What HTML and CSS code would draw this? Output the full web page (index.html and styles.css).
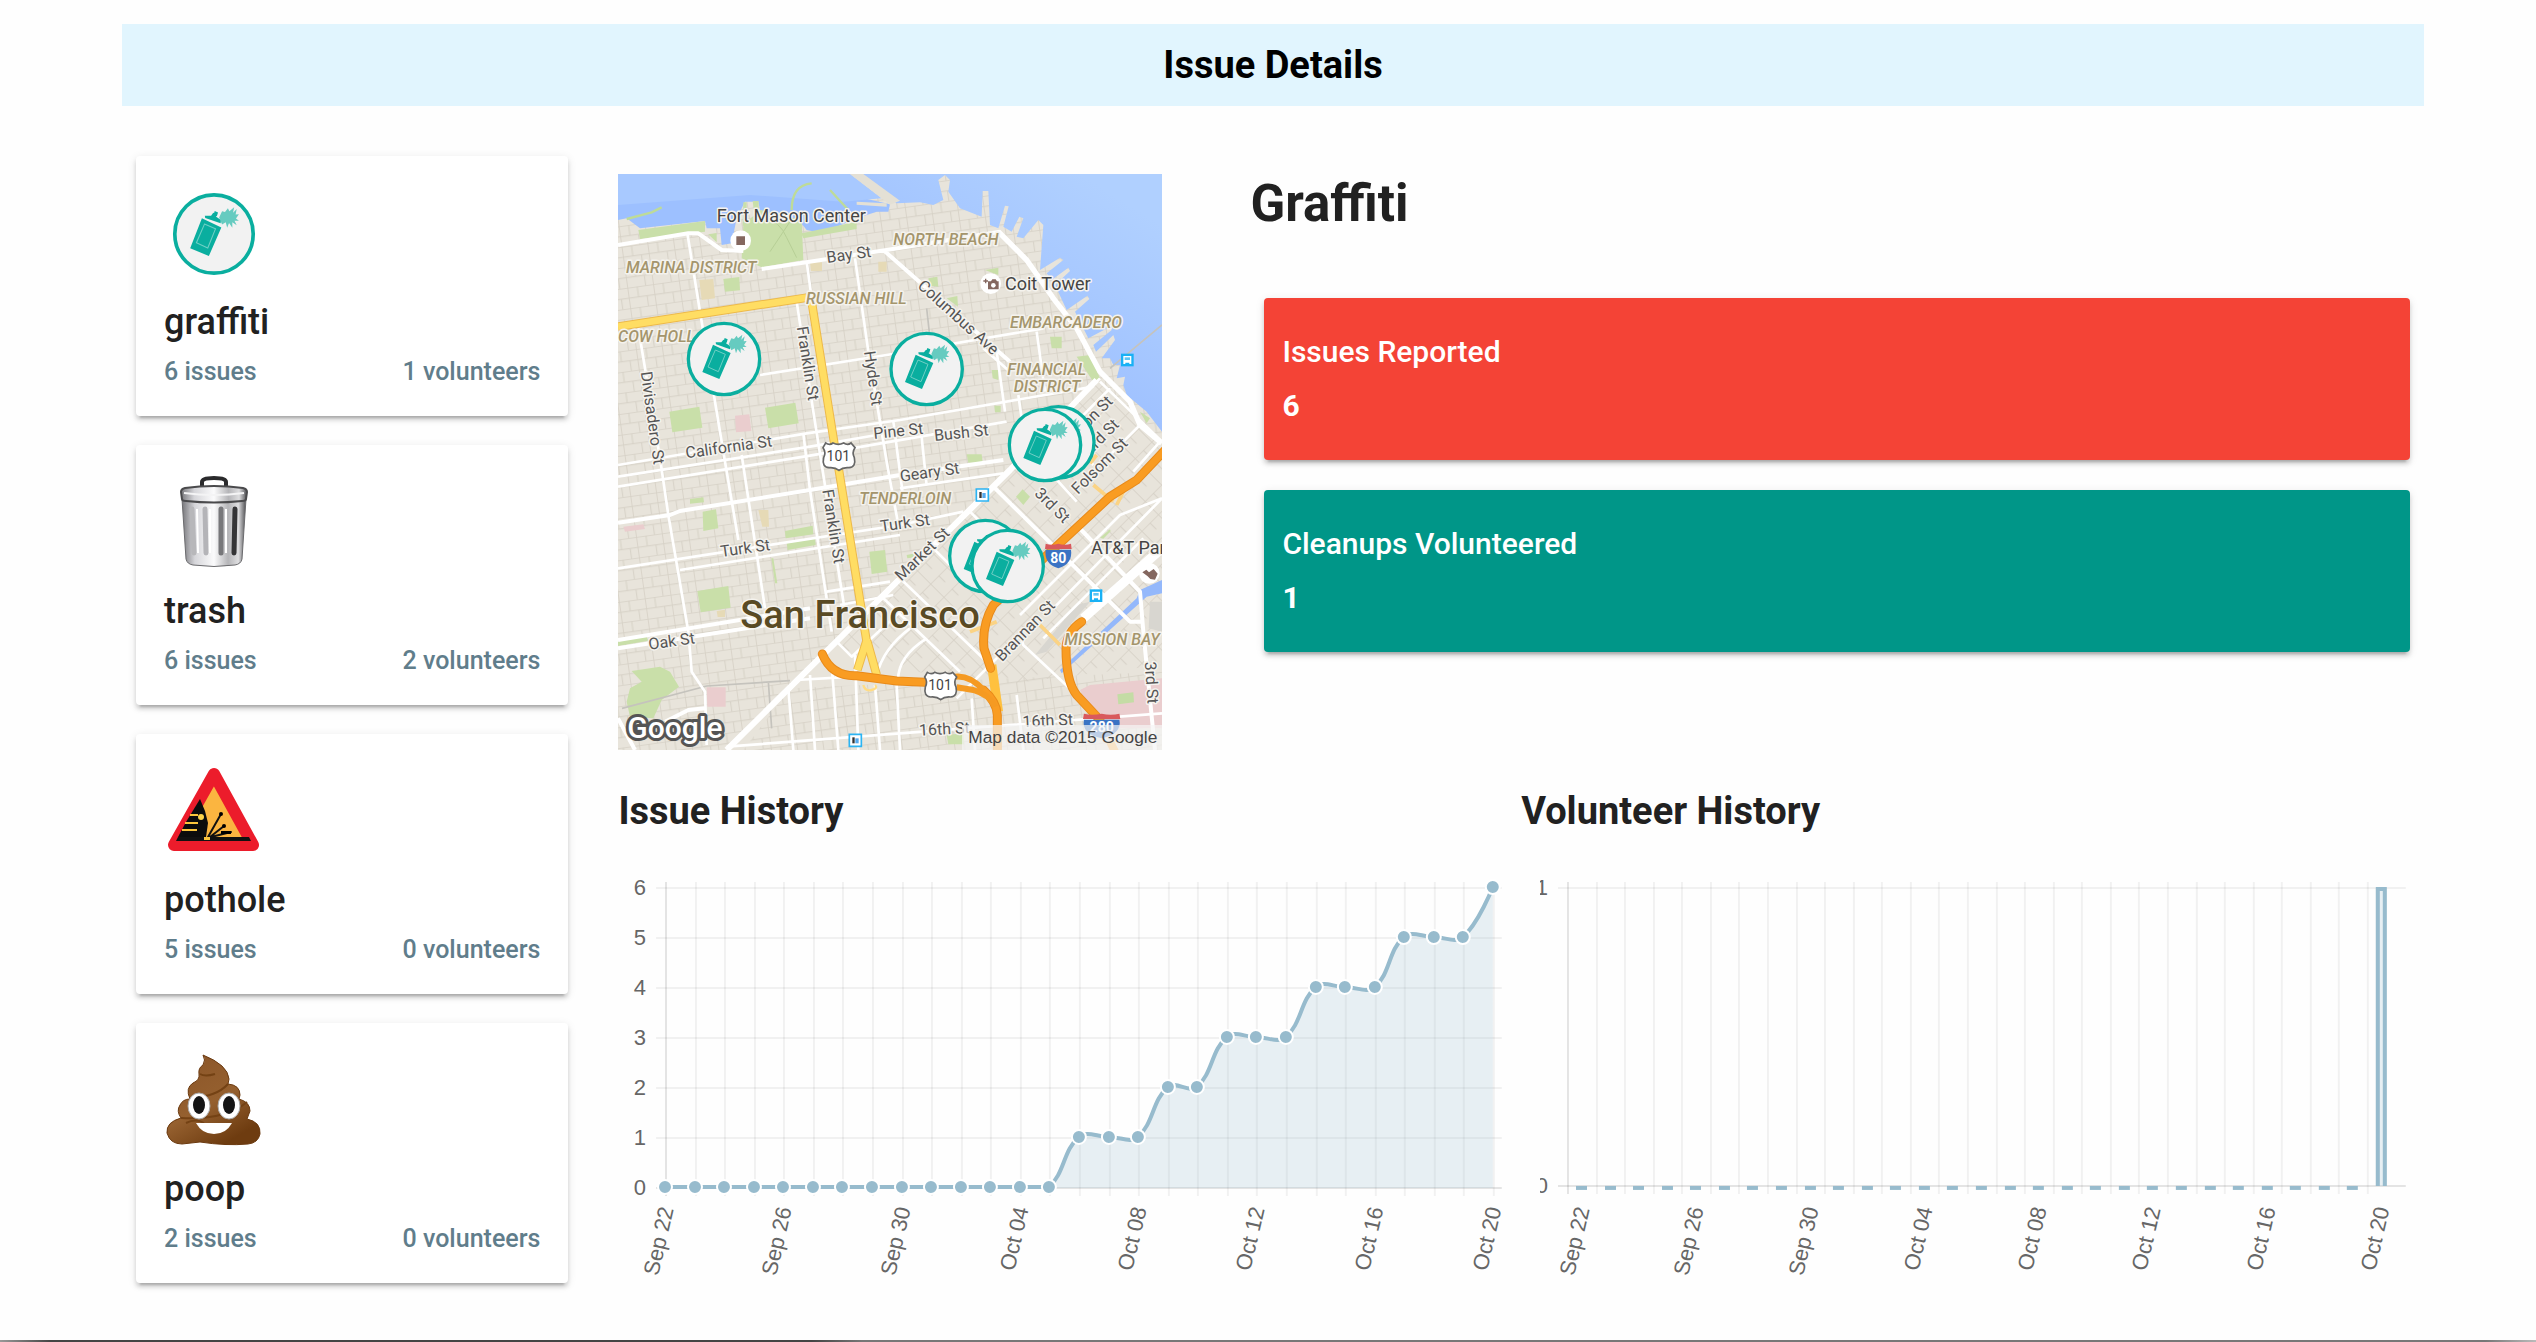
FILE: index.html
```html
<!DOCTYPE html>
<html lang="en">
<head>
<meta charset="utf-8">
<meta name="viewport" content="width=device-width, initial-scale=1">
<title>Issue Details</title>
<link rel="stylesheet" href="styles.css">
</head>
<body>
<svg class="defs" aria-hidden="true">
  <defs>
    <symbol id="spray" viewBox="-131 -131 262 262">
      <circle r="107" fill="#f2f2f2" stroke="#0aae9f" stroke-width="10"/>
      <path fill="#0aae9f" d="M-33-43 20-18-14 60-65 39zM-25-50-8-50-2-58 6-55 6-47 19-38 18-29-24-44zM-2-50 2-63 11-59 8-49z"/>
      <path fill="none" stroke="#6fcfc5" stroke-width="3" d="M-26-27 4-14-17 38-48 24z"/>
      <path fill="#66cbc0" d="M14-45 22-62 30-60 38-70 42-62 55-73 52-58 62-68 59-53 68-54 60-42 68-36 56-36 62-24 50-32 50-17 41-30 36-17 32-32 22-26z"/>
    </symbol>
    <linearGradient id="steel">
      <stop offset="0" stop-color="#77777b"/><stop offset=".2" stop-color="#d6d6da"/>
      <stop offset=".5" stop-color="#fbfbfc"/><stop offset=".72" stop-color="#b5b5b8"/>
      <stop offset=".88" stop-color="#dedee0"/><stop offset="1" stop-color="#4d4d50"/>
    </linearGradient>
    <linearGradient id="brown" x2=".6" y2="1">
      <stop offset="0" stop-color="#8a5428"/><stop offset=".6" stop-color="#95602f"/><stop offset="1" stop-color="#6e3c10"/>
    </linearGradient>
  </defs>
</svg>

<div class="page">
  <header class="banner"><h1>Issue Details</h1></header>

  <div class="layout">
    <ul class="issues">
      <li class="issue">
        <svg class="issue-icon" viewBox="0 0 96 96" aria-hidden="true"><use href="#spray" width="96" height="96" y="2"/></svg>
        <h2>graffiti</h2>
        <p class="meta"><span>6 issues</span><span>1 volunteers</span></p>
      </li>
      <li class="issue">
        <svg class="issue-icon" viewBox="0 0 96 96" aria-hidden="true">
          <path d="M36 16V9q0-4 12-4t12 4v7" fill="none" stroke="#2a2a2c" stroke-width="4"/>
          <path d="M16 26h64l-4 60q-1 5-7 6-21 3-42 0-6-1-7-6z" fill="url(#steel)" stroke="#6b6b6e"/>
          <g stroke-width="5" stroke-linecap="round">
            <path d="M26 36l2 44" stroke="#b7b7ba"/><path d="M39 36l1 44" stroke="#b4b4b8"/>
            <path d="M55 36v44" stroke="#77777a"/><path d="M69 36l-1 44" stroke="#343436"/>
          </g>
          <path d="M31 36l1 44M44 36v44M60 36v44" stroke="#fff" stroke-width="2"/>
          <path d="M15 19q0-3 4-4 29-4 58 0 4 1 4 4l-1 7q0 2-4 2-28 3-56 0-4 0-4-2z" fill="url(#steel)" stroke="#4a4a4c" stroke-width="2"/>
          <path d="M18 20q30 4 60 0" fill="none" stroke="#f4f4f5" stroke-width="2"/>
        </svg>
        <h2>trash</h2>
        <p class="meta"><span>6 issues</span><span>2 volunteers</span></p>
      </li>
      <li class="issue">
        <svg class="issue-icon" viewBox="0 0 96 96" aria-hidden="true">
          <path d="M48 12 87 83H8z" fill="#fbb540" stroke="#ec1c2b" stroke-width="12" stroke-linejoin="round"/>
          <path d="M12 75h71l2 4H10z" fill="#111"/>
          <path d="M34 37l5 12 3 12-2 14H12l8-15z" fill="#0c0c0c"/>
          <path d="M24 53h8M19 61h13M16 68h15" stroke="#fbc53c" stroke-width="2"/>
          <circle cx="35" cy="55" r="3" fill="#fbd24a"/>
          <path d="M42 75 55 52M44 75 58 64M45 75 65 70" stroke="#111" stroke-width="2" stroke-linecap="round"/>
          <circle cx="55" cy="52" r="2"/><circle cx="58" cy="64" r="2"/><path d="M55 69h10v3H55z"/>
          <path d="M38 75h6v3h-6z" fill="#fbc53c"/>
        </svg>
        <h2>pothole</h2>
        <p class="meta"><span>5 issues</span><span>0 volunteers</span></p>
      </li>
      <li class="issue">
        <svg class="issue-icon" viewBox="0 0 96 96" aria-hidden="true">
          <path fill="url(#brown)" stroke="#6b3a10" d="M37 4Q62 14 63 28L62 33Q74 34 74 44L73 48Q84 51 84 60L81 68Q95 71 94 83 92 92 82 93 60 95 34 91L16 93Q4 93 1 82 0 71 15 67 10 60 14 54 17 48 24 48 19 37 27 32 34 29 33 23 32 17 37 14 40 9 37 4z"/>
          <path d="M27 46Q50 46 62 33M34 23q5 3 15 0M15 67q45 2 66-16M24 48q8 3 15 1M20 72q10-5 18 0" fill="none" stroke="#744214" stroke-width="2"/>
          <ellipse cx="33" cy="55" rx="11" ry="13" fill="#fff" stroke="#aaa"/><ellipse cx="63" cy="55" rx="11" ry="13" fill="#fff" stroke="#aaa"/>
          <ellipse cx="33" cy="54" rx="6" ry="9" fill="#151515"/><ellipse cx="63" cy="54" rx="6" ry="9" fill="#151515"/>
          <path d="M30 72h36Q60 83 48 83T30 72z" fill="#fff"/>
        </svg>
        <h2>poop</h2>
        <p class="meta"><span>2 issues</span><span>0 volunteers</span></p>
      </li>
    </ul>

    <main class="details">
      <section class="overview">
        <svg class="map" viewBox="24 27 1632 1728" role="img" aria-label="Map of graffiti reports in San Francisco">
          <defs>
            <pattern id="blocks" width="78" height="62" patternUnits="userSpaceOnUse" patternTransform="rotate(-8)">
              <path d="M0 1H78M0 32H78M1 0V62M30 0V32M56 32V62" fill="none" stroke="#d6d1c6" stroke-width="3"/>
            </pattern>
            <pattern id="soma" width="70" height="56" patternUnits="userSpaceOnUse" patternTransform="rotate(-45)">
              <path d="M0 1H70M1 0V56M36 0V28" fill="none" stroke="#d6d1c6" stroke-width="3"/>
            </pattern>
            <linearGradient id="bay" x1=".6" y1=".5" x2="1" y2=".2">
              <stop offset="0" stop-color="#9fc1ff"/><stop offset=".5" stop-color="#a8c9ff"/><stop offset="1" stop-color="#b0d0ff"/>
            </linearGradient>
            <g id="bus"><path d="M-19-19h38v38h-38z" fill="#19b1f5"/><path d="M-12-12h24v24h-6v-4h-12v4h-6z" fill="#fff"/><path d="M-8-8H8v8H-8z" fill="#5cc5f5"/></g>
            <g id="rail"><path d="M-18-18h36v36h-36z" fill="#fff" stroke="#2cb4f3" stroke-width="5"/><path d="M-9-9h7v18h-7z" fill="#333"/><path d="M0-6H10V9H0z" fill="#55a9ee"/></g>
            <g id="route"><path d="M-38-38q12 8 22 0 16 8 32 0 12 8 22 0l12 14q-10 14-2 30 6 28-16 30-18-2-30 8-12-10-30-8-22-2-16-30 8-16-2-30z" fill="#fff" stroke="#666" stroke-width="5"/></g>
            <g id="interstate"><path d="M-38-18q-6 42 38 56 44-14 38-56z" fill="#3a73c4"/><path d="M-38-36q18 6 38 0 20 6 38 0l2 16h-80z" fill="#d9595c"/></g>
          </defs>

          <path d="M24 27H1656V1755H24z" fill="#e8e4db"/>
          <path d="M24 27H1656V1755H24z" fill="url(#blocks)"/>
          <path d="M350 1755 1200 915 1460 645 1656 830V1755z" fill="#e8e4db"/>
          <path d="M680 1440 1200 915 1460 645 1656 830V1500L1160 1560 800 1500z" fill="url(#soma)"/>
          <path d="M540 1570 1656 1520V1755H400z" fill="url(#blocks)"/>

          <path fill="url(#bay)" d="M24 27H720L860 115 930 112 970 120 1000 105 985 45 1005 30 1020 45 1015 80 1050 130 1115 155 1118 78 1135 78 1140 180 1165 190 1185 122 1196 124 1180 185 1205 200 1228 155 1240 160 1220 215 1240 220 1285 165 1300 180 1290 315 1350 278 1360 285 1310 325 1325 345 1375 308 1380 318 1335 360 1370 435 1432 392 1438 402 1395 440 1435 520 1500 485 1505 495 1450 540 1458 560 1510 510 1515 525 1475 580 1500 580 1510 600 1530 600 1520 640 1545 635 1540 660 1550 690 1610 740 1656 800V27z"/>
          <path fill="#9dc0ff" d="M24 165 50 160 90 190 285 168 290 190 330 190 335 240 365 235 380 160 405 110 445 110 450 135 570 170 590 195 640 205 680 185 740 160 800 140 835 140 840 118 720 90 420 70 24 90z"/>
          <path fill="#a8c9ff" d="M24 27H720L815 100 700 110 420 90 24 120z"/>
          <path d="M720 27h40l110 80-30 12zM740 110l90 5v10l-90-6z" fill="#e4e0d5"/>
          <path d="M1590 1275 1656 1245V1285L1610 1295 1355 1525 1350 1515 1580 1300z" fill="#94b8fb"/>

          <g fill="#c9dfa9">
            <path d="M85 195 285 168v32L90 222zM450 135l125 30 5 120-125 22-60-27 5-100zM575 205l165-35v22l-160 28zM340 342l48-6 2 40-45 4zM178 740l90-15 9 63-90 14zM465 728l91-15 10 62-91 15zM400 112h10v70h-12zM428 108h18v32h-14zM295 208l25-4v28z"/>
            <path d="M955 340l27-5 3 30-25-3zM1010 400l32-7 2 32zM1125 315l40-7v22zM1320 515h35v35h-30zM1400 575l40-5 30 70-20 10zM1145 615h20v30l-17-5zM1070 868h45l3 25h-43zM1153 722h19v20h-17zM1590 740l30 20-10 15z"/>
            <path d="M278 1040l40-7 7 57-45 8zM240 1002l40-5 2 15-42 4zM525 1098l83-16 2 26-83 12zM530 1135l85-15 2 20-84 15zM778 1160l47-5 7 65-47 7zM262 1278l93-15 7 65-90 14zM24 1428l86-13 5 12-91 16zM65 1518l85-13 30 15 27 45-52 40-25 55-70-5-10-45 10-40 35-20zM484 1180h6l12 75h-7z"/>
            <path d="M1218 995l20-22 22 22-20 25zM1010 1710l50-5 2 33h-47zM1470 1118l30-25 2 6-22 22zM890 1170l30-6v12l-28 4z"/>
          </g>
          <path d="M460 158q50 10 70 60l30 60M480 260l60-90" fill="none" stroke="#b7cf96" stroke-width="3"/>
          <path d="M545 135Q545 60 605 55M660 75l55 60M50 162l75-20 30-15" fill="none" stroke="#bedb98" stroke-width="7"/>
          <path fill="#eacdce" d="M375 752l43-4 6 50-46 4zM290 1567h57v58h-55zM40 1085l60-7 5 14-60 8zM1410 1575l30-15 216-20v150h-190z"/>
          <path fill="#c4dca5" d="M1522 1588l48-6 2 30-47 6z"/>
          <path fill="#e6dab6" d="M268 345l42-3 5 58-40 5zM600 292h36v26h-33zM805 290h25v30h-25zM445 1035h30l2 50h-20zM320 1338l25-4v22h-22z"/>
          <path fill="#d8d6d0" d="M1620 1310h36v90l-40-10zM1400 1320l40-10-130 150-35 10z"/>
          <path d="M36 1630 290 1563 540 1547M475 1550l10 140M1500 610l156-130M950 430l10 90" fill="none" stroke="#c5c3bd" stroke-width="5"/>

          <!-- streets -->
          <g fill="none" stroke="#fff" stroke-width="8" stroke-linejoin="round">
            <path d="M232 205 270 440 345 890 385 1125M85 490 150 880 175 1050 235 1400 245 1520 285 1580 290 1740M590 290 605 400M560 410 610 740 640 930 705 1340M580 805 600 975 665 1400M735 280 775 560 830 890 865 1080M395 870 465 1330M930 770 950 960M850 770 880 1000M1160 560 1185 740M1280 500 1305 680M1225 690 1235 760"/>
            <path d="M24 900 590 805 870 765 1450 665M24 935 600 845 800 810M24 965 600 872 1190 770M450 630 830 570 1300 490M24 1210 870 1080 1060 1040M210 1215 870 1110M650 1280 840 1250M690 1320 850 1290M350 1745 870 1705 1656 1645M560 1545 730 1535M870 970l310-45M1120 550l80 70"/>
            <path d="M600 1530 615 1755M535 1570 550 1755M665 1500 685 1755M735 1470 745 1755M795 1560 810 1755M860 1560 870 1755M1085 1600 1095 1755M1220 1590 1240 1755"/>
            <path d="M680 1430 725 1475 870 1340M810 1290 1050 1520M870 1240 1130 1490M960 1140 1060 1240M1080 1040 1150 1110M1230 1350 1530 1050 1656 1000M1300 1420 1600 1120M1040 1600 1230 1410 1240 1440 1400 1590M1330 1330 1656 1000M800 1530Q820 1450 900 1390M865 1560Q855 1480 950 1420"/>
            <path d="M1470 650 1656 830M1380 730 1470 640M1380 790 1500 670M1480 890 1590 780M1570 920 1650 830M1330 780 1450 900M1300 900 1400 1010"/>
          </g>
          <g fill="none" stroke="#fff" stroke-width="12" stroke-linejoin="round">
            <path d="M24 240 235 205 265 205 335 255 400 258M455 312 830 255 1170 200M820 255 1200 590M24 1073 180 1050 210 1038 600 975 870 930 1180 885M24 1425 600 1330M24 1450 600 1360M1150 965 1560 1370 1600 1370M1400 1080 1590 1280 1600 1400 1635 1755M24 1660 75 1755M165 1670l40-20 30-15 50-5"/>
            <path d="M1165 200 1250 285 1330 400 1400 490 1470 620 1560 710 1590 780 1655 835" stroke-width="16"/>
            <path d="M350 1755 1200 915 1460 645" stroke-width="18"/>
            <path d="M1420 1360 1656 1150" stroke-width="28"/>
          </g>

          <!-- highways -->
          <g fill="none" stroke-linejoin="round">
            <path d="M24 485 590 398M605 410 672 830 685 905 770 1430M772 1420 742 1515M772 1430 800 1530" stroke="#edb94a" stroke-width="26"/>
            <path d="M24 485 590 398M605 410 672 830 685 905 770 1430M772 1420 742 1515M772 1430 800 1530" stroke="#ffdd63" stroke-width="20"/>
            <path d="M1290 1380l60 60M1080 1400l80-30M1520 1020q10-20 30-60M1450 960l60 50M1460 870l-20 25" stroke="#fbd384" stroke-width="11"/>
            <path d="M760 1560q5 20 25 15t10-15" stroke="#ffdc85" stroke-width="7"/>
            <path d="M1145 1500 1165 1640" stroke="#ffc13f" stroke-width="28"/>
            <g stroke="#e88a1a" stroke-width="27" stroke-linecap="round">
              <path d="M1670 850 1580 945 1500 995 1150 1320Q1115 1380 1122 1450L1142 1510M637 1467Q665 1535 740 1532L860 1548 945 1552M1415 1370Q1370 1400 1368 1450 1368 1550 1400 1590L1470 1665M1162 1770V1650Q1160 1610 1120 1575"/>
            </g>
            <path d="M1670 850 1580 945 1500 995 1150 1320Q1115 1380 1122 1450L1142 1510M637 1467Q665 1535 740 1532L860 1548 945 1552M1415 1370Q1370 1400 1368 1450 1368 1550 1400 1590L1470 1665M1162 1770V1650Q1160 1610 1120 1575" stroke="#f99c22" stroke-width="21" stroke-linecap="round"/>
            <path d="M1035 1535Q1080 1530 1120 1575M1040 1567 1090 1575Q1140 1590 1155 1625" stroke="#f59a22" stroke-width="18"/>
            <path d="M1500 1730l20 40" stroke="#fbb75c" stroke-width="24"/>
          </g>

          <use href="#route" x="685" y="872"/><use href="#route" x="990" y="1560"/>
          <use href="#interstate" x="1345" y="1172"/>
          <use href="#interstate" transform="translate(1475 1682) scale(1.4 1)"/>
          <use href="#bus" x="1552" y="585"/><use href="#bus" x="1458" y="1292"/>
          <use href="#rail" x="1117" y="990"/><use href="#rail" x="736" y="1726"/>
          <g fill="#fff"><circle cx="392" cy="227" r="31"/><circle cx="1142" cy="356" r="31"/><circle cx="1618" cy="1225" r="31"/></g>
          <path d="M379 214h26v26h-26zM1134 349h9l4-6h10l4 6h5v24h-32zM1120 346h5v-5h4v5h5v4h-5v5h-4v-5h-5zM1597 1222l12-8 8 8 14-10 12 14-8 18-14-2-8-8z" fill="#84675f"/>
          <circle cx="1150" cy="361" r="7" fill="#fff"/>

          <g class="map-shield"><text x="685" y="887">101</text><text x="990" y="1575">101</text></g>
          <g class="map-shield map-shield-blue"><text x="1345" y="1194">80</text><text x="1475" y="1700">280</text></g>
          <g class="map-area">
            <text x="48" y="325">MARINA DISTRICT</text>
            <text x="588" y="418">RUSSIAN HILL</text>
            <text x="24" y="532">COW HOLL</text>
            <text x="850" y="241">NORTH BEACH</text>
            <text x="1200" y="488">EMBARCADERO</text>
            <text x="1192" y="631">FINANCIAL</text>
            <text x="1211" y="681">DISTRICT</text>
            <text x="748" y="1017">TENDERLOIN</text>
            <text x="1363" y="1441">MISSION BAY</text>
          </g>
          <g class="map-place">
            <text x="320" y="172">Fort Mason Center</text>
            <text x="1185" y="375">Coit Tower</text>
            <text x="1443" y="1168">AT&amp;T Park</text>
          </g>
          <g class="map-street">
            <text transform="translate(652 294) rotate(-8)">Bay St</text>
            <text transform="translate(920 366) rotate(42)">Columbus Ave</text>
            <text transform="translate(92 622) rotate(82)">Divisadero St</text>
            <text transform="translate(560 487) rotate(81)">Franklin St</text>
            <text transform="translate(637 976) rotate(81)">Franklin St</text>
            <text transform="translate(762 560) rotate(82)">Hyde St</text>
            <text transform="translate(229 880) rotate(-8)">California St</text>
            <text transform="translate(792 822) rotate(-6)">Pine St</text>
            <text transform="translate(974 828) rotate(-6)">Bush St</text>
            <text transform="translate(872 950) rotate(-8)">Geary St</text>
            <text transform="translate(334 1176) rotate(-8)">Turk St</text>
            <text transform="translate(813 1100) rotate(-8)">Turk St</text>
            <text transform="translate(874 1250) rotate(-44)">Market St</text>
            <text transform="translate(118 1454) rotate(-8)">Oak St</text>
            <text transform="translate(1271 988) rotate(45)">3rd St</text>
            <text transform="translate(1604 1491) rotate(86)">3rd St</text>
            <text transform="translate(1404 990) rotate(-45)">Folsom St</text>
            <text transform="translate(1511 712) rotate(-45)" text-anchor="end">Mission St</text>
            <text transform="translate(1530 782) rotate(-45)" text-anchor="end">Howard St</text>
            <text transform="translate(1176 1492) rotate(-46)">Brannan St</text>
            <text transform="translate(928 1712) rotate(-3)">16th St</text>
            <text transform="translate(1238 1687) rotate(-3)">16th St</text>
          </g>
          <text class="map-city" x="750" y="1390">San Francisco</text>

          <use href="#spray" x="211" y="451" width="262" height="262"/>
          <use href="#spray" x="819" y="481" width="262" height="262"/>
          <use href="#spray" x="1214" y="701" width="262" height="262"/>
          <use href="#spray" x="1174" y="709" width="262" height="262"/>
          <use href="#spray" x="995" y="1042" width="262" height="262"/>
          <use href="#spray" x="1062" y="1072" width="262" height="262"/>

          <text class="map-logo" x="52" y="1720">Google</text>
          <path d="M1056 1680H1656V1755H1056z" fill="#f5f5f5" fill-opacity=".7"/>
          <text class="map-credit" x="1642" y="1735">Map data ©2015 Google</text>
        </svg>

        <div class="summary">
          <h2>Graffiti</h2>
          <dl class="stats">
            <div class="stat stat-red"><dt>Issues Reported</dt><dd>6</dd></div>
            <div class="stat stat-teal"><dt>Cleanups Volunteered</dt><dd>1</dd></div>
          </dl>
        </div>
      </section>

      <section class="history">
        <div class="chart">
          <h3>Issue History</h3>
          <svg id="issue-chart" viewBox="0 0 903 420" role="img" aria-label="Issues per day"></svg>
        </div>
        <div class="chart chart-bars">
          <h3>Volunteer History</h3>
          <svg id="volunteer-chart" viewBox="0 0 884 420" role="img" aria-label="Volunteers per day"></svg>
        </div>
      </section>
    </main>
  </div>
</div>
<div class="baseline"></div>
<script src="charts.js"></script>
</body>
</html>
```
FILE: styles.css
```css
* { box-sizing: border-box; }

body {
  margin: 0;
  min-height: 100vh;
  display: flex;
  flex-direction: column;
  background: #fefefe;
  color: #212121;
  font-family: Roboto, "Liberation Sans", sans-serif;
}

h1, h2, h3, p, ul, dl, dd { margin: 0; padding: 0; }
svg { display: block; }
.defs { position: absolute; width: 0; height: 0; }

.page { flex: 1; padding: 24px 112px 16px 122px; }

.banner { background: #e1f5fe; color: #000; text-align: center; padding: 17px 0; }
.banner h1 { font-size: 38px; line-height: 48px; font-weight: 700; }

.layout {
  display: grid;
  grid-template-columns: 1fr 4fr;
  padding-top: 50px;
}

.issues {
  list-style: none;
  display: flex;
  flex-direction: column;
  gap: 29px;
  padding: 0 14px;
}

.issue, .stat {
  border-radius: 4px;
  box-shadow: 0 4px 4px rgba(0, 0, 0, .14), 0 6px 2px -4px rgba(0, 0, 0, .16), 0 2px 10px rgba(0, 0, 0, .1);
}
.issue { background: #fff; padding: 28px 28px 20px; }
.issue-icon { width: 96px; height: 96px; margin: 0 2px 18px; }
.issue h2 { font-size: 36px; line-height: 48px; font-weight: 500; }
.meta {
  display: flex;
  justify-content: space-between;
  padding-top: 2px;
  font-size: 25px;
  line-height: 48px;
  font-weight: 500;
  color: #607d8b;
}

.details { padding: 18px 0 0 36px; }

.overview {
  display: grid;
  grid-template-columns: 544px 1fr;
  gap: 88px;
}
.map { width: 100%; overflow: hidden; }

.summary h2 { font-size: 51px; line-height: 60px; font-weight: 700; }
.stats {
  display: flex;
  flex-direction: column;
  gap: 30px;
  padding: 64px 14px 0;
}
.stat {
  padding: 27px 18px;
  font-size: 30px;
  line-height: 54px;
  font-weight: 500;
  color: #fff;
}
.stat dd { font-weight: 700; }
.stat-red { background: #f44336; }
.stat-teal { background: #009688; }

.history { display: grid; grid-template-columns: 1fr 1fr; padding-top: 37px; }
.chart h3 { font-size: 38px; line-height: 48px; font-weight: 700; margin-bottom: 35px; }
.chart svg { width: 100%; overflow: hidden; }
.chart-bars svg { width: auto; margin-left: 19px; }

.tick { font: 22px "Liberation Sans", sans-serif; fill: #666; text-anchor: end; }
.grid-line { stroke: #000; stroke-opacity: .05; stroke-width: 2; }
.axis-line { stroke: #000; stroke-opacity: .1; stroke-width: 2; }
.series { fill: none; stroke: #97bbcd; stroke-width: 4; }
.series-area { fill: #97bbcd; fill-opacity: .22; }
.series-point { fill: #97bbcd; stroke: #fff; stroke-width: 2; }

.map text { font-family: Roboto, "Liberation Sans", sans-serif; }
.map-street, .map-place, .map-area, .map-city {
  stroke: #f5f3ee;
  stroke-width: 9;
  stroke-linejoin: round;
  paint-order: stroke;
}
.map-street { font-size: 48px; fill: #555; }
.map-place { font-size: 54px; fill: #444; }
.map-area { font-size: 48px; font-style: italic; font-weight: 500; fill: #a4956c; }
.map-city { font-size: 114px; font-weight: 500; fill: #594a24; text-anchor: middle; }
.map-shield { font-size: 42px; fill: #444; text-anchor: middle; }
.map-shield-blue { fill: #fff; font-weight: 700; }
.map-logo { font-size: 90px; font-weight: 500; fill: #fff; stroke: #555; stroke-width: 18; stroke-linejoin: round; paint-order: stroke; }
.map .map-credit { font-family: "Liberation Sans", sans-serif; font-size: 52px; fill: #444; text-anchor: end; }

.baseline {
  height: 2px;
  background: linear-gradient(90deg, #999, #444 2%, #444 32%, #777 34%, #777 98%, #bbb);
}
```
FILE: charts.js
```js
const NS = 'http://www.w3.org/2000/svg';
const labels = ['Sep 22', 'Sep 26', 'Sep 30', 'Oct 04', 'Oct 08', 'Oct 12', 'Oct 16', 'Oct 20'];
const issues = [0, 0, 0, 0, 0, 0, 0, 0, 0, 0, 0, 0, 0, 0, 1, 1, 1, 2, 2, 3, 3, 3, 4, 4, 4, 5, 5, 5, 6];
const volunteers = issues.map((_, i) => (i === 28 ? 1 : 0));

function add(svg, name, attrs, text) {
  const el = document.createElementNS(NS, name);
  for (const key in attrs) el.setAttribute(key, attrs[key]);
  if (text !== undefined) el.textContent = text;
  svg.appendChild(el);
}

function line(svg, cls, x1, y1, x2, y2) {
  add(svg, 'line', { class: cls, x1, y1, x2, y2 });
}

function axes(svg, o) {
  const step = (o.last - o.left) / 28;
  for (let v = 0; v <= o.max; v++) {
    const y = Math.round(o.bottom - (o.bottom - o.top) * v / o.max);
    line(svg, v ? 'grid-line' : 'axis-line', o.left - 10, y, o.right, y);
    add(svg, 'text', { class: 'tick', x: o.left - 20, y: y + 7 }, v);
  }
  for (let i = 0; i < 29; i++) {
    const x = Math.round(o.left + step * i);
    line(svg, i ? 'grid-line' : 'axis-line', x, o.top - 6, x, o.bottom + 8);
  }
  labels.forEach((label, i) => {
    const x = Math.round(o.left + o.labelShift + step * i * 4);
    add(svg, 'text', { class: 'tick', dy: 8, transform: `translate(${x} 337) rotate(-77)` }, label);
  });
  return step;
}

function drawLine(svg) {
  const step = axes(svg, { left: 48, last: 876, right: 884, top: 18, bottom: 318, max: 6, labelShift: 0 });
  const pts = issues.map((v, i) => ({ x: Math.round(47 + step * i), y: 317 - 50 * v }));
  const clamp = y => Math.min(317, Math.max(17, y));
  const ctrl = pts.map((p, i) => {
    if (i === 0 || i === pts.length - 1) return { a: p, b: p };
    const prev = pts[i - 1], next = pts[i + 1];
    const d0 = Math.hypot(p.x - prev.x, p.y - prev.y);
    const d1 = Math.hypot(next.x - p.x, next.y - p.y);
    const fa = 0.4 * d0 / (d0 + d1), fb = 0.4 * d1 / (d0 + d1);
    return {
      a: { x: p.x - fa * (next.x - prev.x), y: clamp(p.y - fa * (next.y - prev.y)) },
      b: { x: p.x + fb * (next.x - prev.x), y: clamp(p.y + fb * (next.y - prev.y)) }
    };
  });
  let d = `M${pts[0].x} ${pts[0].y}`;
  for (let i = 1; i < pts.length; i++) {
    const b = ctrl[i - 1].b, a = ctrl[i].a;
    d += `C${b.x} ${b.y} ${a.x} ${a.y} ${pts[i].x} ${pts[i].y}`;
  }
  add(svg, 'path', { class: 'series-area', d: `${d}V318H${pts[0].x}z` });
  add(svg, 'path', { class: 'series', d });
  pts.forEach(p => add(svg, 'circle', { class: 'series-point', cx: p.x, cy: p.y, r: 7 }));
}

function drawBars(svg) {
  const left = 28;
  const step = axes(svg, { left, last: 828, right: 866, top: 18, bottom: 316, max: 1, labelShift: 14 });
  volunteers.forEach((v, i) => {
    const x = Math.round(left + step * i) + 8;
    if (v) {
      add(svg, 'path', { class: 'series-area', d: `M${x} 316V18h11V316z` });
      add(svg, 'path', { class: 'series', d: `M${x + 2} 316V19h7V316` });
    } else {
      line(svg, 'series', x, 318, x + 11, 318);
    }
  });
}

drawLine(document.getElementById('issue-chart'));
drawBars(document.getElementById('volunteer-chart'));
```
